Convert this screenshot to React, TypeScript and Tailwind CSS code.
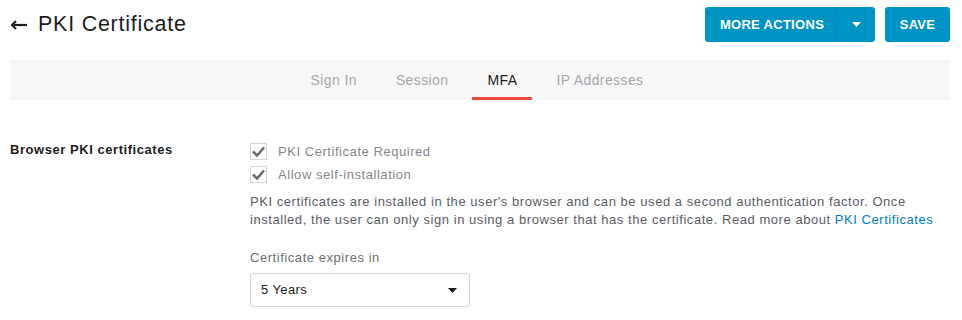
import { FC } from 'react';

const FONT = "font-['Liberation_Sans',Arial,sans-serif]";

const BackArrow: FC = () => (
  <svg width="17" height="10" viewBox="0 0 17 10" fill="none" className="text-[#1d1d21]">
    <path d="M16 5H3" stroke="currentColor" strokeWidth="2.2" />
    <path d="M5 1L1 5L5 9" stroke="currentColor" strokeWidth="2.2" strokeLinejoin="miter" fill="none" />
  </svg>
);

const Caret: FC<{ className?: string }> = ({ className }) => (
  <svg width="9" height="5" viewBox="0 0 9 5" className={className}>
    <path d="M0 0H9L4.5 5Z" fill="currentColor" />
  </svg>
);

const CheckBox: FC<{ label: string }> = ({ label }) => (
  <label className="flex items-center gap-[11px] h-[23px]">
    <span className="w-[17px] h-[17px] border border-[#d4d4d4] bg-white flex items-center justify-center">
      <svg width="13" height="11" viewBox="0 0 13 11">
        <path d="M1 5.5L5 9.5L12 1.5" stroke="#6b6b6b" strokeWidth="2.6" fill="none" />
      </svg>
    </span>
    <span className="text-[13px] text-[#86868e] tracking-[0.55px]">{label}</span>
  </label>
);

const tabs = ['Sign In', 'Session', 'MFA', 'IP Addresses'];

const App = () => {
  return (
    <div className={`${FONT} w-[962px] h-[320px] bg-white px-[10px] pr-[12px] pt-[7px] overflow-hidden`}>
      <div className="flex items-center justify-between h-[35px]">
        <div className="flex items-center gap-[10px] pl-[1px]">
          <BackArrow />
          <h1 className="text-[21.5px] text-[#1d1d21] tracking-[0.75px] leading-none">PKI Certificate</h1>
        </div>
        <div className="flex items-center gap-[10px]">
          <div className="flex h-[35px] w-[170px] rounded-[3px] bg-[#0094c5] text-white">
            <button className="flex-1 pl-[2px] text-[13px] font-bold tracking-[0.3px]">MORE ACTIONS</button>
            <span className="w-px bg-[#0086b3]" />
            <button className="w-[37px] flex items-center justify-center">
              <Caret className="text-white" />
            </button>
          </div>
          <button className="h-[35px] w-[65px] rounded-[3px] bg-[#0094c5] text-white text-[13px] font-bold tracking-[0.3px]">
            SAVE
          </button>
        </div>
      </div>

      <div className="mt-[18px] h-[40px] bg-[#f7f7f7] flex justify-center gap-[9px] pr-[6px]">
        {tabs.map((t) => (
          <div
            key={t}
            className={
              t === 'MFA'
                ? 'px-[15px] flex items-center text-[14px] tracking-[0.4px] text-[#1d1d21] border-b-[3px] border-[#ef4a40] pt-[3px]'
                : 'px-[15px] flex items-center text-[14px] tracking-[0.4px] text-[#a8a8ae]'
            }
          >
            {t}
          </div>
        ))}
      </div>

      <div className="flex mt-[40px]">
        <div className="w-[240px] pt-[1px] text-[13px] font-bold text-[#1d1d21] leading-[18px] tracking-[0.55px]">
          Browser PKI certificates
        </div>
        <div className="flex-1">
          <CheckBox label="PKI Certificate Required" />
          <CheckBox label="Allow self-installation" />
          <p className="mt-[7px] text-[13px] leading-[18px] text-[#5c5c66] w-[690px] tracking-[0.55px]">
            PKI certificates are installed in the user's browser and can be used a second authentication factor. Once
            installed, the user can only sign in using a browser that has the certificate. Read more about{' '}
            <a className="text-[#007dc1]">PKI Certificates</a>
          </p>
          <div className="mt-[20px] text-[13px] text-[#6e6e78] leading-[18px] tracking-[0.55px]">
            Certificate expires in
          </div>
          <div className="mt-[6px] w-[220px] h-[34px] border border-[#d4d4d4] rounded-[3px] flex items-center justify-between pl-[10px] pr-[12px]">
            <span className="text-[13px] text-[#1d1d21] tracking-[0.4px]">5 Years</span>
            <Caret className="text-[#1d1d21]" />
          </div>
        </div>
      </div>
    </div>
  );
};

export default App;
